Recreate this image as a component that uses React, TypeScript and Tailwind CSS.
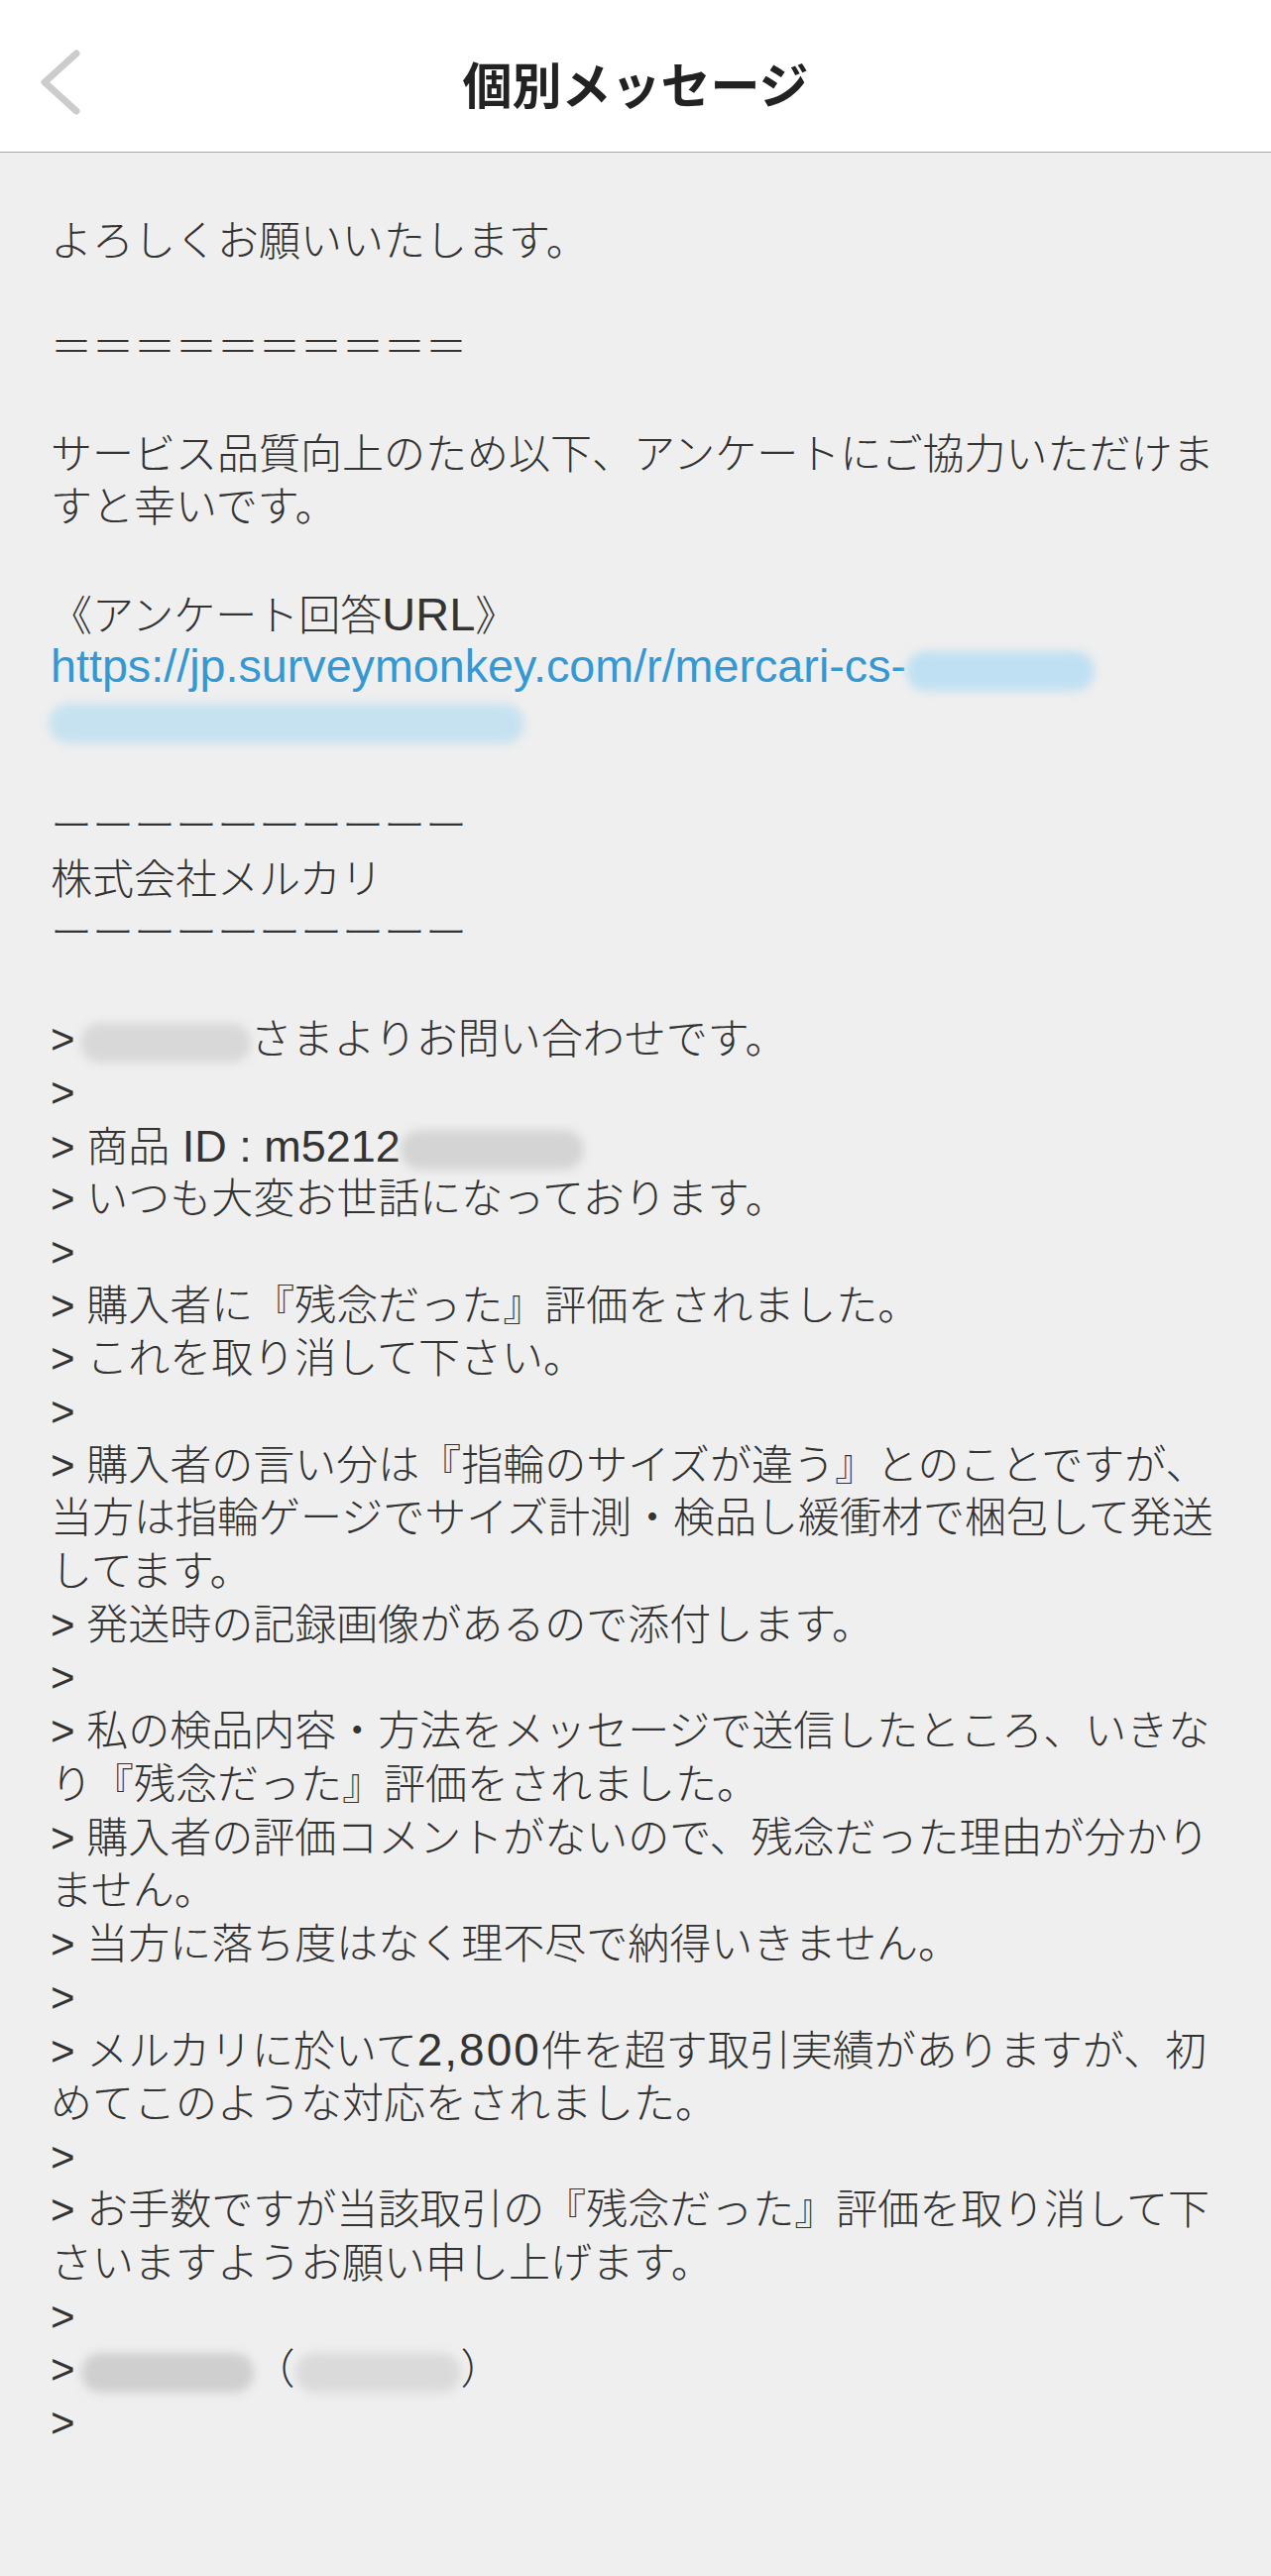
const bodyFont = {
  fontFamily: '"Liberation Sans", "Noto Sans CJK JP", sans-serif',
};

function Blur({ w, color, className = "" }: { w: number; color: string; className?: string }) {
  return (
    <span
      className={`inline-block align-middle h-[40px] rounded-full blur-[5px] ${color} ${className}`}
      style={{ width: w }}
    />
  );
}

function Line({ children, className = "" }: { children?: React.ReactNode; className?: string }) {
  return <div className={`h-[53.7px] whitespace-nowrap ${className}`}>{children}</div>;
}

export default function App() {
  const dash = "ーーーーーーーーーー";
  return (
    <div className="flex flex-col h-[2599px] bg-[#efefef]">
      <header className="h-[154px] shrink-0 bg-white border-b border-[#a8a8a8] pt-[12px] grid grid-cols-[1fr_auto_1fr] items-center">
        <div className="pl-[41px]">
          <svg width="40" height="66" viewBox="0 0 40 66" fill="none">
            <polyline
              points="36,4 4,33 36,62"
              stroke="#cccccc"
              strokeWidth="7"
              strokeLinecap="round"
              strokeLinejoin="round"
            />
          </svg>
        </div>
        <h1
          className="text-[50px] font-bold text-[#222] leading-none"
          style={{ fontFamily: '"Noto Sans CJK JP", sans-serif' }}
        >
          個別メッセージ
        </h1>
        <div />
      </header>

      <main className="flex-1 overflow-hidden">
        <div
          className="mt-[9.2px] pl-[51px] text-[42px] leading-[53.7px] text-[#333] font-light"
          style={bodyFont}
        >
          <Line />
          <Line>よろしくお願いいたします。</Line>
          <Line />
          <Line>＝＝＝＝＝＝＝＝＝＝</Line>
          <Line />
          <Line>サービス品質向上のため以下、アンケートにご協力いただけま</Line>
          <Line>すと幸いです。</Line>
          <Line />
          <Line>
            《アンケート回答<span className="text-[47px]">URL</span>》
          </Line>
          <Line>
            <span className="text-[#3498d3] text-[46.7px]">https://jp.surveymonkey.com/r/mercari-cs-</span>
            <Blur w={190} color="bg-[#bfe0f2]" />
          </Line>
          <Line>
            <Blur w={480} color="bg-[#c6e2f0]" className="ml-[-2px]" />
          </Line>
          <Line />
          <Line>{dash}</Line>
          <Line>株式会社メルカリ</Line>
          <Line>{dash}</Line>
          <Line />
          <Line>
            &gt;
            <Blur w={172} color="bg-[#d8d8d8]" className="ml-[5px]" />
            さまよりお問い合わせです。
          </Line>
          <Line>&gt;</Line>
          <Line>
            &gt; 商品<span className="text-[45px]"> ID : m5212</span>
            <Blur w={185} color="bg-[#d4d4d4]" />
          </Line>
          <Line>&gt; いつも大変お世話になっております。</Line>
          <Line>&gt;</Line>
          <Line>&gt; 購入者に『残念だった』評価をされました。</Line>
          <Line>&gt; これを取り消して下さい。</Line>
          <Line>&gt;</Line>
          <Line>&gt; 購入者の言い分は『指輪のサイズが違う』とのことですが、</Line>
          <Line>当方は指輪ゲージでサイズ計測・検品し緩衝材で梱包して発送</Line>
          <Line>してます。</Line>
          <Line>&gt; 発送時の記録画像があるので添付します。</Line>
          <Line>&gt;</Line>
          <Line>&gt; 私の検品内容・方法をメッセージで送信したところ、いきな</Line>
          <Line>り『残念だった』評価をされました。</Line>
          <Line>&gt; 購入者の評価コメントがないので、残念だった理由が分かり</Line>
          <Line>ません。</Line>
          <Line>&gt; 当方に落ち度はなく理不尽で納得いきません。</Line>
          <Line>&gt;</Line>
          <Line>
            &gt; メルカリに於いて<span className="text-[46px] tracking-[2px]">2,800</span>件を超す取引実績がありますが、初
          </Line>
          <Line>めてこのような対応をされました。</Line>
          <Line>&gt;</Line>
          <Line>&gt; お手数ですが当該取引の『残念だった』評価を取り消して下</Line>
          <Line>さいますようお願い申し上げます。</Line>
          <Line>&gt;</Line>
          <Line>
            &gt;
            <Blur w={174} color="bg-[#cfcfcf]" className="ml-[6px]" />
            （<Blur w={167} color="bg-[#dadada]" />）
          </Line>
          <Line>&gt;</Line>
        </div>
      </main>
    </div>
  );
}
